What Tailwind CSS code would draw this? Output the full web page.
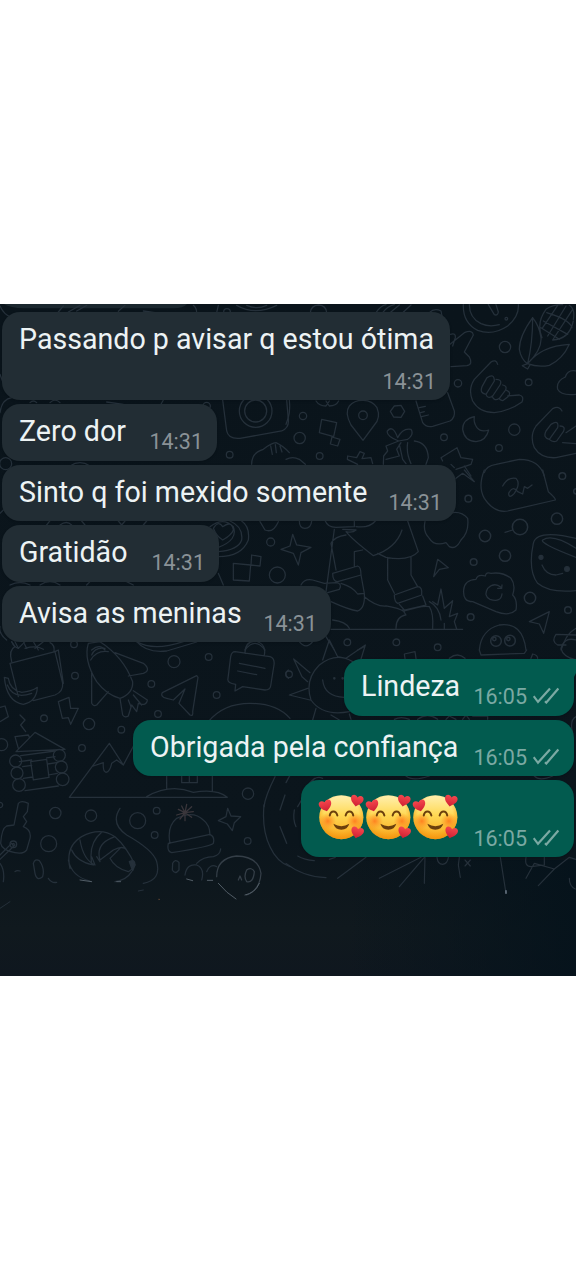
<!DOCTYPE html>
<html lang="pt-BR">
<head>
<meta charset="utf-8">
<title>Conversa</title>
<script src="https://cdn.jsdelivr.net/npm/@tailwindcss/browser@4"></script>
</head>
<body class="bg-white">
<svg class="absolute h-0 w-0">
  <defs>
    <linearGradient id="face" x1="0" y1="0" x2="0" y2="1"><stop offset="0" stop-color="#fff0b0"/><stop offset=".45" stop-color="#ffd954"/><stop offset="1" stop-color="#f8a51c"/></linearGradient>
    <radialGradient id="rim" cx=".5" cy=".42" r=".6"><stop offset=".65" stop-color="#f79a10" stop-opacity="0"/><stop offset="1" stop-color="#f08c08" stop-opacity=".8"/></radialGradient>
    <radialGradient id="blush"><stop offset="0" stop-color="#ff7a1c" stop-opacity=".9"/><stop offset="1" stop-color="#ff8a1c" stop-opacity="0"/></radialGradient>
    <linearGradient id="red" x1="0" y1="0" x2="0" y2="1"><stop offset="0" stop-color="#f5474d"/><stop offset="1" stop-color="#cf1f33"/></linearGradient>
    <path id="heart" d="M0 18C-12 9-20 2-19-8C-18-17-6-19 0-10C6-19 18-17 19-8C20 2 12 9 0 18Z" fill="url(#red)"/>
    <symbol id="love" viewBox="95 70 141 145">
      <circle cx="165" cy="143" r="66.500" fill="url(#face)"/><circle cx="165" cy="143" r="66.500" fill="url(#rim)"/>
      <circle cx="124" cy="155" r="25" fill="url(#blush)"/><circle cx="206" cy="155" r="25" fill="url(#blush)"/>
      <path d="M130 138C133 122 149 122 153 138M178 138C182 122 198 122 201 138" fill="none" stroke="#6b3f0c" stroke-width="6" stroke-linecap="round"/>
      <path d="M141 163Q165 178 189 163Q184 181 165 181Q146 181 141 163Z" fill="#6b3f0c"/>
      <use href="#heart" transform="translate(117 108) rotate(-14)"/><use href="#heart" transform="translate(212 93) rotate(12)"/><use href="#heart" transform="translate(213 189) rotate(14)"/>
    </symbol>
    <symbol id="ticks" viewBox="0 0 78 50"><path d="M2 27L15 44L51 4M36 42L40 46L76 4" fill="none" stroke="currentColor" stroke-width="6.500"/></symbol>
    <linearGradient id="shade" x1="0" y1="0" x2="0" y2="1"><stop offset="0" stop-color="#0a141b"/><stop offset=".8" stop-color="#0b151c"/><stop offset=".93" stop-color="#10191e"/><stop offset="1" stop-color="#0f171f"/></linearGradient>
    <linearGradient id="edge"><stop offset=".6" stop-color="#04121b" stop-opacity="0"/><stop offset="1" stop-color="#04121b" stop-opacity=".8"/></linearGradient>
  </defs>
</svg>
<div class="h-[1280px] w-[576px] overflow-hidden bg-white pt-[304px]">
<main class="relative isolate flex h-[672px] flex-col overflow-hidden bg-[#0a141b] pt-2 font-['Roboto',sans-serif] text-[28.6px] leading-[34px] text-[#edf3f4]">
  <svg class="absolute inset-0 -z-10 h-full w-full" viewBox="0 304 576 672" fill="none" stroke="#25303a" stroke-width="3.800" stroke-linecap="round" stroke-linejoin="round">
    <path d="M0 304H576V976H0Z" fill="url(#shade)" stroke="none"/><path d="M0 860H576V976H0Z" fill="url(#edge)" stroke="none"/>
    <path d="M0 304H187Q183 308.300 174 308.300H24Q10 308 4 304Z" fill="#1b272e" stroke="none"/>
    <g transform="translate(0 296) scale(.33333)">
      <path d="M0 30Q10 55 35 65M175 48L190 30M205 48L240 28M230 45L260 28M355 46L375 28M430 45L465 50M580 28Q590 36 590 50M655 28L650 50M710 28Q765 60 830 28M740 28Q770 42 800 28M0 235L15 275M0 350Q5 310 35 305M90 320Q100 310 110 320M150 320Q165 305 180 320M320 318L370 325M490 312L480 330M668 312L680 405Q685 430 720 427L845 405Q868 395 865 370L860 312M755 505Q755 470 790 460Q815 440 828 440Q850 450 868 470M812 450L817 475M826 446L829 470M840 450L846 468"/>
      <circle cx="681" cy="48" r="10"/><circle cx="767" cy="345" r="49"/><circle cx="767" cy="345" r="33"/><circle cx="689" cy="476" r="10"/><circle cx="17" cy="503" r="18"/><circle cx="620" cy="330" r="11"/><path d="M210 510Q240 490 270 510"/>
    </g>
    <g transform="translate(286 296) scale(.33333)">
      <path d="M73 50Q75 28 98 27Q120 28 122 50M270 50Q285 28 300 26M290 50Q305 30 325 26M312 50L340 27M350 50L375 27M430 50Q445 35 465 45L468 60"/>
      <path d="M532 26Q530 80 575 103Q620 120 665 90Q700 60 697 26M550 26Q550 65 585 83Q610 94 640 86M607 26L625 56Q635 60 637 48L630 26"/>
      <path d="M492 145L535 110Q560 100 562 117L535 168L550 183Q562 205 543 209L495 212M493 115Q510 110 508 125L500 150"/>
      <path d="M740 65Q700 120 700 160Q705 190 725 203Q768 160 765 125Q760 90 740 65ZM740 65Q740 140 725 203Q765 150 850 145Q830 190 790 208Q755 215 725 203L709 209L725 219L733 205M768 125Q750 80 780 40Q800 25 830 26M782 50Q850 70 858 95M772 75L845 115M765 95L820 130M800 132L860 40M785 120L840 30M770 95L815 28M862 70Q868 40 850 28M800 132Q850 130 862 75"/>
      <path d="M635 205Q630 188 615 198L565 250Q545 280 560 315Q580 350 625 350Q670 345 708 318Q715 300 700 297L665 300M603 245Q625 230 625 255L600 295Q580 292 588 272ZM630 250Q650 250 642 267L620 300Q605 310 600 295M650 267Q665 270 658 283L640 307Q625 318 618 300M662 283Q678 290 665 303L650 314Q640 312 640 307"/>
      <path d="M828 345Q820 328 800 338L750 390Q730 420 745 455Q765 488 810 485L870 472M795 385Q820 370 815 395L790 430Q770 425 780 405ZM822 390Q840 390 832 407L812 435Q800 440 790 430M840 410L870 390M830 440L870 443M870 225Q845 220 838 243Q810 255 815 280Q825 300 870 295"/>
      <path d="M565 362Q530 370 530 400Q535 435 570 437Q600 435 608 402Q585 410 573 395Q562 380 565 362ZM231 433L195 387Q175 350 190 330Q205 312 232 313Q260 314 273 335Q285 365 265 387ZM325 330L345 328L356 346L345 364L323 363L313 346ZM107 370L152 380L143 422L100 410ZM138 423L162 430L155 450L133 444ZM90 315Q100 330 120 330L130 315M120 315L130 330Q150 330 158 315M0 385Q15 350 10 312M390 315L410 380Q420 395 440 391L492 375Q508 365 505 345L485 290M400 335L418 331M404 350L415 347M407 362L427 357"/>
      <path d="M338 435Q300 420 304 405Q320 385 335 425Q350 395 375 400Q385 415 365 430ZM338 435L300 450L305 465L293 480L292 505M345 440L332 460L340 480L300 490M365 440Q360 470 375 503M385 435Q425 440 427 485L420 505M340 445L350 490L360 503M0 490Q20 480 40 490L58 505M215 505L184 490L185 480L212 485L222 467L235 472L228 488L255 485L260 503M470 495L465 485L513 455L525 485L560 490L555 505L510 520M535 510L555 540M495 505L505 515M595 530Q600 510 630 505L700 490Q760 490 775 540"/>
      <circle cx="657" cy="153" r="17"/><circle cx="728" cy="259" r="10"/><circle cx="516" cy="262" r="11"/><circle cx="51" cy="360" r="11"/><circle cx="231" cy="358" r="13"/><circle cx="41" cy="426" r="17"/><circle cx="101" cy="480" r="10"/><circle cx="474" cy="424" r="10"/><circle cx="685" cy="401" r="17"/><circle cx="639" cy="456" r="10"/><circle cx="661" cy="68" r="4"/>
    </g>
    <g transform="translate(0 470) scale(.33333)">
      <path d="M0 130L10 120M140 165L150 152M180 165Q200 150 215 165M245 153L255 165M355 153L365 165L375 153M430 165L440 153M630 170Q670 140 700 170Q715 210 655 232M690 153Q730 170 725 210Q715 240 655 245M725 153Q750 170 745 210Q725 260 655 260M640 175Q655 150 668 170Q695 150 700 180Q695 195 668 210Q650 200 640 175ZM780 155L795 180Q820 190 835 155M700 280L752 285L748 333L700 330ZM755 255L783 260L780 288L753 285ZM655 310L670 345M30 345Q60 330 90 345M120 345Q150 325 180 345M260 345L270 335M380 335L400 345M0 470Q-5 490 20 510M35 515Q40 530 55 535M70 515L80 535M100 515L115 540M275 540Q300 520 315 540M410 515Q460 545 550 515M735 540Q765 500 795 540"/>
      <circle cx="812" cy="216" r="12"/><circle cx="832" cy="315" r="24"/><circle cx="222" cy="523" r="10"/>
    </g>
    <g transform="translate(286 470) scale(.33333)">
      <path d="M20 193L32 225L75 232L45 248L37 285L22 250L-15 238L12 228ZM40 153Q40 175 57 175Q75 175 77 153M118 153Q125 172 150 172L205 170L205 153M145 178L120 365M170 178L210 180Q200 190 180 185Q200 210 262 257Q330 235 348 180M210 170Q250 175 268 153M365 153L397 245Q370 275 300 262L275 250M180 195Q145 200 135 220L150 300M205 290L205 245L230 240M140 310L215 288Q225 290 225 315L155 335Q140 335 140 310ZM225 315L235 370L215 372Q200 350 165 340M235 370Q238 415 215 423Q190 420 135 395M45 345Q55 325 80 330L115 340L150 338Q170 340 160 358L125 368M305 262L305 330L325 370M375 262L375 315L395 350M325 375L395 350Q410 350 407 375L335 400Q325 395 325 375ZM340 403L355 420L420 405L410 378M350 420L360 435Q330 440 330 475M355 423Q410 405 430 410Q443 430 440 475M235 380Q270 410 300 408Q340 415 355 425M135 478L530 478M140 450Q180 455 190 475M430 395Q460 410 465 450M440 395L455 405L465 357L475 415L500 392L490 440L515 430L505 455L512 477M475 460L475 477"/>
      <path d="M475 135Q520 115 545 145Q550 185 525 210Q510 240 490 230L480 218Q445 230 430 205Q410 185 417 155M510 25L530 10L565 35L535 0M595 0Q575 50 595 85Q625 130 665 123L808 90Q810 85 787 65L770 0M650 48Q665 20 690 25Q705 40 685 70Q668 88 668 70Q680 45 695 65L710 72L715 50L725 55L738 45M657 187L680 180M455 268L487 293L460 298L443 320ZM533 360Q530 395 560 395L630 425Q670 440 690 420Q695 390 680 375Q690 345 675 325Q650 305 615 310Q600 305 598 318Q575 312 570 328Q535 330 533 360ZM645 352Q625 335 605 355Q592 378 612 388Q645 398 648 372M648 345L647 355L635 355M730 455L790 425L773 490L760 462ZM870 205L830 197Q750 185 742 220Q725 300 755 340Q790 370 870 362M870 235Q800 190 770 210Q760 220 870 262M768 285Q780 315 810 315L830 310M580 540Q585 480 640 465Q710 455 720 540M870 495L810 493Q795 515 815 525L840 525M870 475Q845 490 835 515L825 540M120 500L145 540M215 540L235 530M40 515Q60 540 80 515"/>
      <g stroke-width="4.500"><circle cx="547" cy="86" r="10"/><circle cx="829" cy="18" r="10"/><circle cx="871" cy="64" r="8"/><circle cx="813" cy="146" r="17"/><circle cx="702" cy="171" r="23"/><circle cx="597" cy="198" r="17"/><circle cx="657" cy="257" r="17"/><circle cx="563" cy="276" r="10"/><circle cx="732" cy="384" r="17"/><circle cx="846" cy="420" r="10"/><circle cx="554" cy="441" r="10"/><circle cx="630" cy="513" r="16"/><circle cx="672" cy="512" r="16"/><circle cx="625" cy="507" r="5"/><circle cx="667" cy="507" r="5"/></g>
      <g fill="#25303a"><circle cx="765" cy="262" r="6"/><circle cx="843" cy="297" r="7"/></g>
    </g>
    <g transform="translate(0 640) scale(.33333)">
      <path d="M30 70L55 170M30 70L165 35L188 130Q190 155 165 165L100 182M165 35L175 30L190 130M35 65Q25 30 45 20L35 5M45 5L55 25L75 5M75 25Q110 15 130 28M105 25L130 5M150 8Q165 15 162 35M13 112L25 115Q30 150 65 157Q95 155 112 142Q110 185 70 193Q20 185 13 112ZM22 135Q40 180 95 160"/>
      <path d="M265 10Q250 60 290 125Q320 165 360 175Q400 160 398 125Q370 50 300 5ZM275 45Q285 20 315 25M272 60Q290 30 325 35M345 38L430 70Q455 90 430 100L385 108M275 95L275 190Q280 200 290 195L325 155M360 175L368 225Q375 235 385 228L395 195L410 215L415 190Q440 200 442 180L400 152M385 180L393 200M400 165L425 195M410 5Q440 40 500 33L590 6"/>
      <path d="M590 107L487 158Q480 170 500 175L520 180L555 147L537 190L570 225Q580 230 578 215L594 112ZM175 185L207 172L212 205L235 205L212 253L205 233L187 235ZM60 225L75 240L62 255L77 275M0 202L15 198L25 230L0 245"/>
      <path d="M48 335L105 277L195 328ZM55 325L45 290L85 285L88 292M62 347L165 333M68 380L95 376M143 372L170 368M70 415L98 411M145 405L172 400M75 452L175 438M92 365L140 358L147 412L100 420ZM58 365L95 360M140 354L165 350"/>
      <path d="M208 472L328 310L370 375L410 300L500 400M208 472L682 472Q650 445 580 457Q510 430 440 470M280 378L310 368Q308 395 318 397Q330 395 335 370L350 360L370 375M500 405V445M637 405V455M545 405V428H592V405M568 405V428M625 245Q670 190 750 190Q830 190 870 235"/>
      <path d="M705 35L810 50Q825 55 822 75L812 138Q810 150 795 150L728 140L705 153L707 133Q680 130 684 115L692 50Q695 35 705 35ZM718 70L795 85M713 93L770 104M735 40Q735 5 765 3Q800 10 793 45M865 90Q850 100 865 115M840 510L855 465M792 500Q795 470 825 410"/>
      <circle cx="47" cy="363" r="18"/><circle cx="178" cy="346" r="18"/><circle cx="51" cy="399" r="18"/><circle cx="184" cy="381" r="18"/><circle cx="57" cy="435" r="19"/><circle cx="188" cy="418" r="19"/>
      <circle cx="225" cy="107" r="10"/><circle cx="132" cy="235" r="10"/><circle cx="267" cy="252" r="17"/><circle cx="246" cy="324" r="10"/><circle cx="364" cy="269" r="10"/><circle cx="474" cy="222" r="10"/><circle cx="454" cy="132" r="10"/><circle cx="522" cy="65" r="18"/><circle cx="626" cy="51" r="10"/><circle cx="650" cy="165" r="10"/><circle cx="744" cy="461" r="17"/><circle cx="5" cy="314" r="18"/>
    </g>
    <g transform="translate(286 640) scale(.33333)">
      <path d="M110 60L130 0L155 50L180 55L238 15L225 57M72 98L23 57L48 110L65 125M65 145L10 165L72 180M90 205L80 240M135 225L160 240M190 222L195 238M200 65Q150 35 100 75Q55 120 75 180Q110 230 190 215M110 120Q115 170 175 172M357 55L355 42L387 35L390 55M490 55Q515 35 537 55M580 30L585 45L715 40L722 30M735 55L740 42Q755 45 755 55M870 0Q835 -10 825 25Q830 50 870 60M325 238Q345 228 370 238M395 238Q425 215 455 238M480 238L490 228L510 238M530 238L540 225L550 238M560 228H605V238M360 408Q380 425 430 408M745 408Q760 425 800 408M870 230Q850 240 860 280"/>
      <path d="M0 428L15 400M35 500L85 415M25 510Q20 540 30 560M70 430Q90 405 110 415"/>
      <circle cx="184" cy="7" r="10"/><circle cx="331" cy="7" r="10"/><circle cx="455" cy="22" r="10"/><circle cx="9" cy="103" r="10"/><circle cx="145" cy="115" r="2"/><circle cx="170" cy="115" r="2"/>
    </g>
    <g transform="translate(0 800) scale(.33333)">
      <path d="M55 10Q65 0 85 10L82 35L70 50L80 65L70 80Q95 90 90 115L80 150Q70 163 45 158Q5 150 2 130Q5 85 20 78L42 75ZM0 165L35 130M0 178L45 135M0 190Q15 210 10 245M210 205Q195 140 245 110Q300 80 345 110Q380 140 405 195M240 120Q250 180 285 195M215 150Q230 185 280 195M275 190Q265 130 305 97M300 180Q285 130 345 110M300 180L340 150Q370 135 380 150M330 175L360 145M330 175Q345 205 385 215L400 205M205 180Q215 230 270 243M345 245Q380 240 395 215M275 170L285 195M290 170L300 185M360 25Q330 70 380 105Q460 150 470 185Q485 240 430 250M510 130Q500 80 530 55Q580 30 610 60Q630 75 630 105M505 130L630 103Q645 110 640 130Q630 140 515 158Q500 155 505 130ZM683 25L693 48L722 50L703 68L697 92L682 72L655 62L678 50ZM590 190Q610 170 640 170Q660 165 662 147M518 190Q525 175 537 187V210Q525 225 517 210ZM792 15Q785 90 810 140Q830 185 870 200M840 80L860 130M100 190Q105 175 118 182Q135 205 128 230Q110 245 105 220ZM555 225Q560 190 590 195Q615 205 605 240M620 215Q630 190 650 200M45 215Q50 210 60 213M145 235Q155 250 170 247"/>
      <path d="M555 38L535 28M555 38L545 18M555 38L560 13M555 38L575 20M555 38L580 35M555 38L575 52M555 38L555 62M555 38L540 57M555 38L530 45" stroke="#3a363b"/>
      <path d="M650 230Q650 175 710 168Q775 170 783 220Q780 270 740 285M740 210Q755 200 763 215Q760 250 740 245Q730 230 740 210ZM715 240L720 228L725 240" stroke="#343e47"/>
      <path d="M240 240L275 245M350 245H362M560 237L578 242M622 241H638M655 250Q680 280 708 297M735 285Q765 280 778 250" stroke="#515c65" stroke-width="3"/><path d="M0 325L30 305M415 273L430 270" stroke-width="3"/>
      <path d="M388 185Q405 175 405 195L398 212Z" fill="#25303a"/>
      <circle cx="166" cy="39" r="17"/><circle cx="273" cy="47" r="17"/><circle cx="413" cy="62" r="24"/><circle cx="470" cy="32" r="10"/><circle cx="464" cy="105" r="10"/><circle cx="146" cy="131" r="24"/><circle cx="743" cy="123" r="10"/><circle cx="40" cy="133" r="10"/><circle cx="40" cy="133" r="3"/><circle cx="0" cy="15" r="8"/><circle cx="477" cy="298" r="1.500" stroke="#5a4432" stroke-width="2"/>
    </g>
    <g transform="translate(286 770) scale(.33333)" stroke-width="3.500">
      <path d="M0 280Q50 320 120 323M155 325L240 262M35 258Q55 270 85 272M130 268L148 262M280 325L405 262M340 350L415 262M415 340L417 262M453 262Q455 283 470 283Q485 280 487 262M520 262L517 285L523 322M537 270L553 288M553 270L537 288M643 262L660 370M720 262Q715 290 735 290L775 285L775 262M720 325L745 280L805 297L757 347M805 297L850 262L870 268M850 325Q850 350 868 357"/>
      <path d="M660 362V370" stroke="#8290a0"/>
    </g>
  </svg>

  <div class="flex flex-col items-start gap-1 pl-[2px]">
    <div class="flex h-[88px] w-[448px] flex-col rounded-[18px] bg-[#222d34] pt-2.5 pr-3.5 pl-[17px] shadow-sm">
      <p class="whitespace-nowrap">Passando p avisar q estou ótima</p>
      <time class="mt-[13px] self-end text-[21.5px] leading-[26px] text-[#8a9297]">14:31</time>
    </div>
    <div class="flex h-[56.500px] w-[215px] justify-between rounded-[18px] bg-[#222d34] pt-2.5 pr-3.5 pl-[17px] shadow-sm">
      <p class="whitespace-nowrap">Zero dor</p><time class="mt-[15px] text-[21.5px] leading-[26px] text-[#8a9297]">14:31</time>
    </div>
    <div class="flex h-[56.500px] w-[454px] justify-between rounded-[18px] bg-[#222d34] pt-2.5 pr-3.5 pl-[17px] shadow-sm">
      <p class="whitespace-nowrap">Sinto q foi mexido somente</p><time class="mt-[15px] text-[21.5px] leading-[26px] text-[#8a9297]">14:31</time>
    </div>
    <div class="flex h-[56.500px] w-[217px] justify-between rounded-[18px] bg-[#222d34] pt-2.5 pr-3.5 pl-[17px] shadow-sm">
      <p class="whitespace-nowrap">Gratidão</p><time class="mt-[15px] text-[21.5px] leading-[26px] text-[#8a9297]">14:31</time>
    </div>
    <div class="flex h-[56.500px] w-[329px] justify-between rounded-[18px] bg-[#222d34] pt-2.5 pr-3.5 pl-[17px] shadow-sm">
      <p class="whitespace-nowrap">Avisa as meninas</p><time class="mt-[15px] text-[21.5px] leading-[26px] text-[#8a9297]">14:31</time>
    </div>
  </div>

  <div class="mt-[17px] flex flex-col items-end gap-1 pr-[2px]">
    <div class="relative flex h-[56.500px] w-[230px] justify-between rounded-[18px] rounded-tr-none bg-[#025b4f] pt-2.5 pr-[15px] pl-[17px] shadow-sm">
      <svg class="absolute top-0 -right-[2px] h-[18px] w-[3px]" viewBox="0 0 3 18"><path d="M0 0H3V14L1 18H0Z" fill="#025b4f"/></svg>
      <p class="whitespace-nowrap">Lindeza</p>
      <div class="mt-[15px] flex gap-1.5 text-[#7ba9a3]"><time class="text-[21.5px] leading-[26px]">16:05</time><svg class="mt-[3px] h-[17px] w-[26px]"><use href="#ticks"/></svg></div>
    </div>
    <div class="flex h-[56.500px] w-[441px] justify-between rounded-[18px] bg-[#025b4f] pt-2.5 pr-[15px] pl-[17px] shadow-sm">
      <p class="whitespace-nowrap">Obrigada pela confiança</p>
      <div class="mt-[15px] flex gap-1.5 text-[#7ba9a3]"><time class="text-[21.5px] leading-[26px]">16:05</time><svg class="mt-[3px] h-[17px] w-[26px]"><use href="#ticks"/></svg></div>
    </div>
    <div class="flex h-[77px] w-[273px] items-start justify-between rounded-[18px] bg-[#025b4f] pr-[15px] pl-[17px] shadow-sm">
      <div class="mt-[13px] flex" role="img" aria-label="🥰🥰🥰">
        <svg class="h-[48px] w-[47px]"><use href="#love"/></svg><svg class="h-[48px] w-[47px]"><use href="#love"/></svg><svg class="h-[48px] w-[47px]"><use href="#love"/></svg>
      </div>
      <div class="mt-[46px] flex gap-1.5 text-[#7ba9a3]"><time class="text-[21.5px] leading-[26px]">16:05</time><svg class="mt-[3px] h-[17px] w-[26px]"><use href="#ticks"/></svg></div>
    </div>
  </div>
</main>
</div>
</body>
</html>
